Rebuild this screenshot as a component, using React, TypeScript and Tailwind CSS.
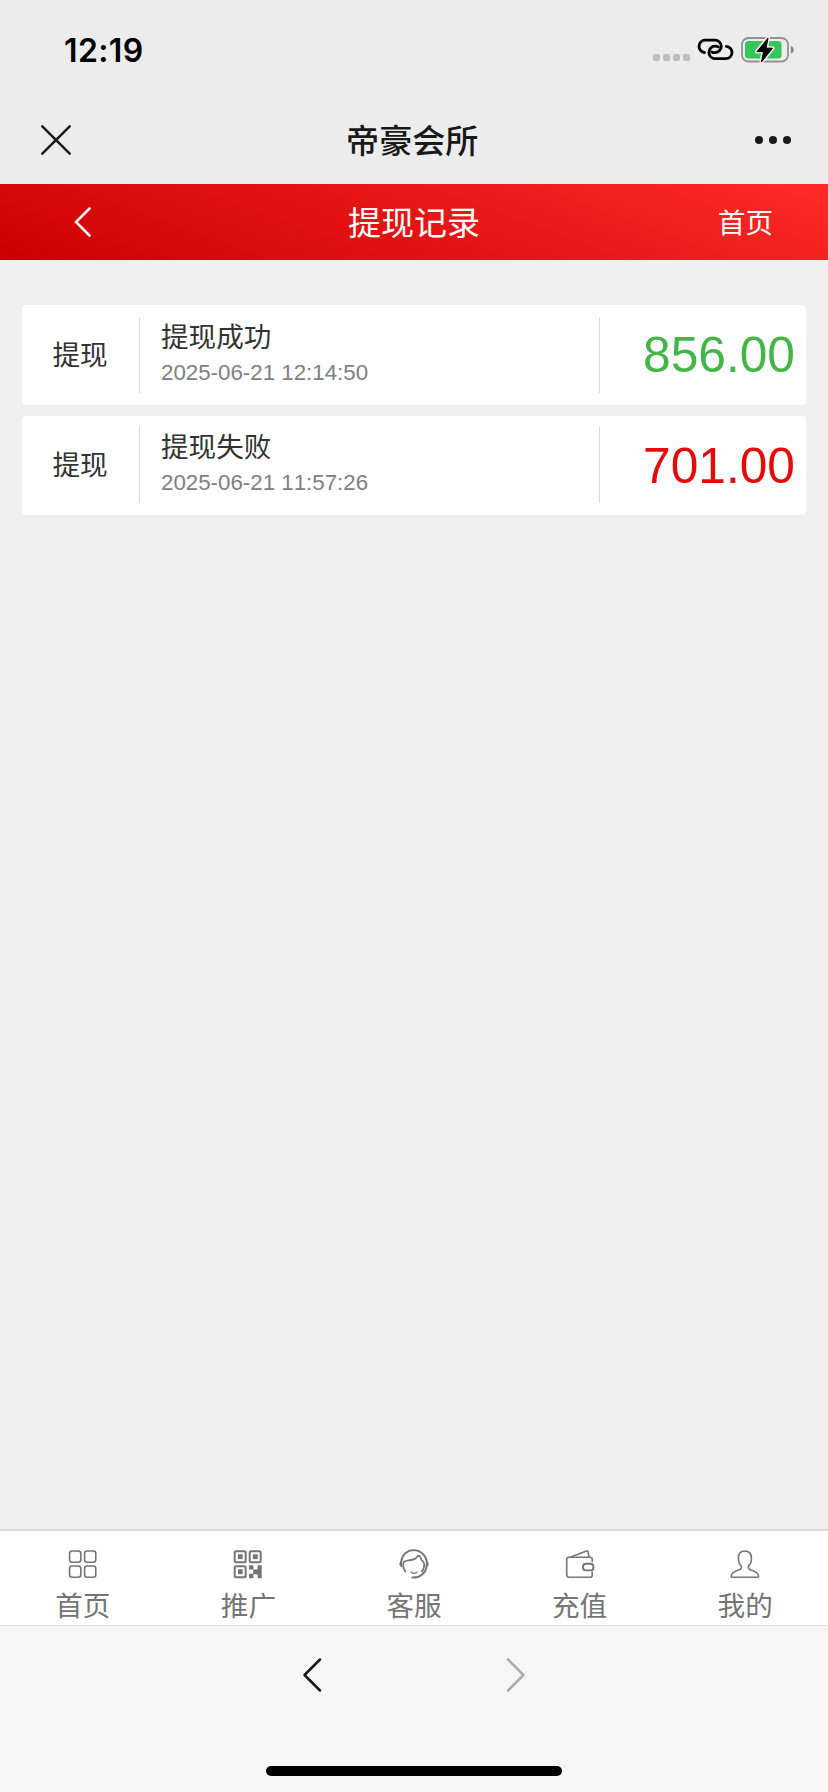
import type { ReactNode } from 'react';

interface WithdrawRecord {
  type: string;
  status: string;
  time: string;
  amount: string;
  success: boolean;
}

const records: WithdrawRecord[] = [
  { type: '提现', status: '提现成功', time: '2025-06-21 12:14:50', amount: '856.00', success: true },
  { type: '提现', status: '提现失败', time: '2025-06-21 11:57:26', amount: '701.00', success: false },
];

function TabIcon({ children }: { children: ReactNode }) {
  return (
    <svg width="32" height="32" viewBox="0 0 32 32" fill="none" stroke="#757575" strokeWidth="1.6" strokeLinecap="round" strokeLinejoin="round">
      {children}
    </svg>
  );
}

const tabs = [
  {
    label: '首页',
    icon: (
      <TabIcon>
        <rect x="2.6" y="3" width="11.2" height="11.2" rx="2.4" />
        <rect x="17.6" y="3" width="11.2" height="11.2" rx="2.4" />
        <rect x="2.6" y="18" width="11.2" height="11.2" rx="2.4" />
        <rect x="17.6" y="18" width="11.2" height="11.2" rx="2.4" />
      </TabIcon>
    ),
  },
  {
    label: '推广',
    icon: (
      <TabIcon>
        <g strokeWidth="2">
          <rect x="2.7" y="3.2" width="11" height="11" rx="1.5" />
          <rect x="17.7" y="3.2" width="11" height="11" rx="1.5" />
          <rect x="2.7" y="18.2" width="11" height="11" rx="1.5" />
        </g>
        <g fill="#757575" stroke="none">
          <rect x="5.9" y="6.3" width="4.8" height="4.8" />
          <rect x="20.9" y="6.3" width="4.8" height="4.8" />
          <rect x="5.9" y="21.3" width="4.8" height="4.8" />
          <path d="M17 17.3h4.4v4.2h4.2v-4.2h4.1v12.9h-4.1v-4h-4.2v4H17v-4.4h4.2v-4.2H17z" />
        </g>
      </TabIcon>
    ),
  },
  {
    label: '客服',
    icon: (
      <TabIcon>
        <path d="M3.2 13.6C4 6.800 9 2.200 15.700 2.200S27.800 7 28.800 13.600" strokeWidth="1.800" />
        <path d="M3.400 13.200c-2 1.500-1.900 4 .2 5.400z" fill="#757575" strokeWidth="1.200" />
        <path d="M28.600 13.200c2 1.500 1.900 4-.2 5.400z" fill="#757575" strokeWidth="1.200" />
        <path d="M7.600 23.600C5.300 21 4.800 17.600 5.600 14.200c1.400-2.600 9-1 12.600-4.200.8-.9 1-2.300 2.500-2.400 1.700 0 1.800 2.200 2.600 3.800.9 1.700 2.600 2.300 2.900 4.200.3 3.200-.8 6-2.400 8" strokeWidth="1.700" />
        <path d="M12.900 24.200c1.800 1.300 4.200 1.300 6 0" strokeWidth="1.200" />
        <path d="M28.700 17.400c-.6 7.600-6.500 12.600-14.200 12.200" strokeWidth="2" />
      </TabIcon>
    ),
  },
  {
    label: '充值',
    icon: (
      <TabIcon>
        <path d="M28.200 13.400v-2.200c0-1.300-.8-2-2-2H5.100c-1.500 0-2.400.9-2.400 2.300v15.300c0 1.500.9 2.400 2.400 2.400h21.100c1.300 0 2-.8 2-2v-3.100" />
        <path d="M7.400 8.800 22.500 3.100c.8-.3 1.300 0 1.500.7l1 4.900" />
        <rect x="19" y="15.800" width="10.400" height="6.600" rx="2.900" strokeWidth="1.900" />
      </TabIcon>
    ),
  },
  {
    label: '我的',
    icon: (
      <TabIcon>
        <path d="M12.400 18.200c.6 2.200-.4 3.100-3.400 4.100-4.200 1.400-6.500 2.900-6.800 5.700-.1.800.2 1.200 1 1.200h25.400c.8 0 1.100-.4 1-1.200-.4-2.800-2.700-4.300-6.900-5.700-2.900-1-3.900-1.900-3.300-4.100 2.400-2 3-4.700 3-8.200 0-4.400-2.300-7-6.500-7s-6.500 2.600-6.500 7c0 3.500.6 6.200 3 8.200z" />
      </TabIcon>
    ),
  },
];

function StatusBar() {
  return (
    <div className="flex h-[96px] items-center justify-between pt-[4px] pr-[33px] pl-[63px]">
      <span className="ml-px pt-px font-['Inter',sans-serif] text-[32px] leading-none font-semibold tracking-[0.4px] text-black">12:19</span>
      <div className="flex items-center">
        <div className="mt-[14px] mr-[7px] flex gap-[3px]">
          {[0, 1, 2, 3].map((i) => (
            <span key={i} className="h-[7px] w-[7px] rounded-[2px] bg-[#bdbdbd]" />
          ))}
        </div>
        <svg className="mr-[7px]" width="37" height="26" viewBox="0 0 37 26" fill="none" stroke="#000" strokeWidth="2.8" strokeLinecap="round">
          <path d="M7.5 15.5C4.5 15.3 2 12.5 2 9.300 2 5.900 4.700 3.100 8.100 3.100h9.700c3.700 0 6.500 2.800 6.500 6.200s-2.800 6.300-6.500 6.300c-1.300 0-2.300-.3-3.100-.7" />
          <path d="M29.300 9.300c3.100.3 5.700 3 5.700 6.200 0 3.400-2.700 6.200-6.100 6.200H18.300c-3.700 0-6.400-2.800-6.400-6.200s2.700-6.300 6.400-6.300c1.300 0 2.300.3 3.100.7" />
        </svg>
        <svg width="54" height="28" viewBox="0 0 54 28">
          <rect x="1" y="2" width="46" height="23.500" rx="6.500" fill="none" stroke="#929292" strokeWidth="1.800" />
          <rect x="4" y="5" width="36.500" height="17.500" rx="3.500" fill="#34c759" />
          <path d="M49.800 9.800c1.800.7 2.900 2.200 2.900 4s-1.100 3.300-2.900 4z" fill="#858585" />
          <path d="M27 2 16 15.600h6.500L20.500 26 31.500 12.200h-6.500z" fill="#000" stroke="#ececec" strokeWidth="4" strokeLinejoin="round" />
          <path d="M27 2 16 15.600h6.500L20.500 26 31.500 12.200h-6.500z" fill="#000" stroke="#000" strokeWidth="1" strokeLinejoin="round" />
        </svg>
      </div>
    </div>
  );
}

function TitleBar() {
  return (
    <div className="flex h-[88px] items-center justify-between pr-[37px] pl-[40px]">
      <svg width="32" height="32" viewBox="0 0 32 32" stroke="#191919" strokeWidth="2.500" strokeLinecap="round">
        <path d="M2.300 2.300 29.700 29.700M29.700 2.300 2.300 29.700" />
      </svg>
      <h1 className="mr-[3px] pt-[3px] text-[33.100px] leading-none font-medium text-[#191919]">帝豪会所</h1>
      <div className="flex gap-[6.500px]">
        <span className="h-[7.500px] w-[7.500px] rounded-full bg-[#191919]" />
        <span className="h-[7.500px] w-[7.500px] rounded-full bg-[#191919]" />
        <span className="h-[7.500px] w-[7.500px] rounded-full bg-[#191919]" />
      </div>
    </div>
  );
}

function PageHeader() {
  return (
    <div className="grid h-[76px] grid-cols-[1fr_auto_1fr] items-center bg-linear-[20deg] from-[#cc0000] to-[#ff2a2a] text-white">
      <svg className="ml-[73px]" width="20" height="32" viewBox="0 0 20 32" fill="none" stroke="currentColor" strokeWidth="2.500" strokeLinecap="round">
        <path d="M16.500 2.500 3 16 16.500 29.500" />
      </svg>
      <h2 className="pt-[2px] text-[33px] leading-none">提现记录</h2>
      <span className="mr-[55px] justify-self-end pt-[3px] text-[27.600px] leading-none">首页</span>
    </div>
  );
}

function RecordCard({ record }: { record: WithdrawRecord }) {
  return (
    <div className="flex h-[99.500px] items-center rounded-[4px] bg-white">
      <div className="flex h-[76px] w-[118px] items-center justify-center border-r border-[#d9d9d9] pt-[2px] pr-[1px] text-[27.600px] leading-none text-[#333]">
        {record.type}
      </div>
      <div className="flex h-[76px] flex-1 flex-col border-r border-[#d9d9d9] pl-[21px]">
        <span className="mt-[7px] text-[27.600px] leading-[28px] text-[#333]">{record.status}</span>
        <span className="mt-[8px] text-[22.300px] leading-[26px] text-[#808080] [font-kerning:none]">{record.time}</span>
      </div>
      <div className={`w-[206px] pt-[3px] pr-[11px] text-right text-[49.700px] leading-none ${record.success ? 'text-[#44b549]' : 'text-[#e60b0b]'}`}>
        {record.amount}
      </div>
    </div>
  );
}

export default function App() {
  return (
    <div className="flex h-[1792px] w-[828px] flex-col bg-[#f0f0f0] font-['Liberation_Sans','Noto_Sans_CJK_SC',sans-serif]">
      <div className="bg-[#ececec]">
        <StatusBar />
        <TitleBar />
      </div>
      <PageHeader />

      <main className="flex flex-1 flex-col gap-[11px] px-[22px] pt-[45px]">
        {records.map((record) => (
          <RecordCard key={record.time} record={record} />
        ))}
      </main>

      <nav className="grid h-[96px] grid-cols-5 border-t-2 border-[#dcdcdc] bg-white">
        {tabs.map((tab) => (
          <div key={tab.label} className="flex flex-col items-center pt-[17px]">
            {tab.icon}
            <span className="mt-[13px] text-[27.600px] leading-[28px] text-[#757575]">{tab.label}</span>
          </div>
        ))}
      </nav>

      <footer className="flex h-[167px] flex-col items-center justify-between border-t border-[#dedede] bg-[#f6f6f6] pt-[31px] pb-[16px]">
        <div className="flex gap-[180px]">
          <svg width="22" height="36" viewBox="0 0 22 36" fill="none" stroke="#191919" strokeWidth="2.500" strokeLinecap="round" strokeLinejoin="round">
            <path d="M18 2.500 2.500 18 18 33.500" />
          </svg>
          <svg width="22" height="36" viewBox="0 0 22 36" fill="none" stroke="#acacac" strokeWidth="2.500" strokeLinecap="round" strokeLinejoin="round">
            <path d="M4 2.500 19.500 18 4 33.500" />
          </svg>
        </div>
        <div className="h-[10px] w-[296px] rounded-full bg-black" />
      </footer>
    </div>
  );
}
